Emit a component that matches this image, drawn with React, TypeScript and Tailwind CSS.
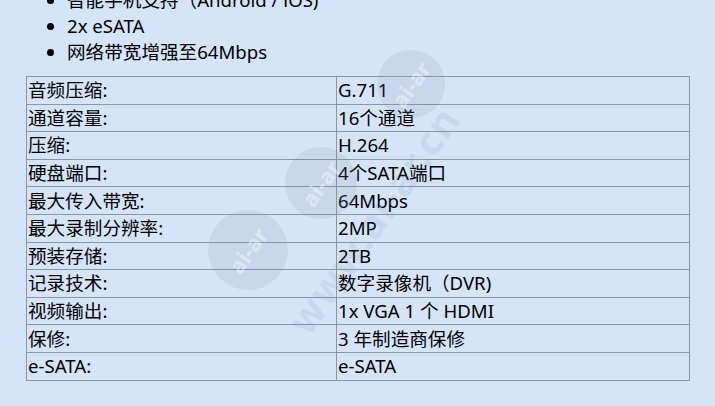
import React from "react";

const rows: [string, string][] = [
  ["音频压缩:", "G.711"],
  ["通道容量:", "16个通道"],
  ["压缩:", "H.264"],
  ["硬盘端口:", "4个SATA端口"],
  ["最大传入带宽:", "64Mbps"],
  ["最大录制分辨率:", "2MP"],
  ["预装存储:", "2TB"],
  ["记录技术:", "数字录像机（DVR)"],
  ["视频输出:", "1x VGA 1 个 HDMI"],
  ["保修:", "3 年制造商保修"],
  ["e-SATA:", "e-SATA"],
];

// faint watermark disc
const Badge = ({ className }: { className: string }) => (
  <div
    className={`absolute flex items-center justify-center rounded-full bg-[#7d8aa3]/15 ${className}`}
  >
    <span className="-rotate-[55deg] text-[22px] font-bold text-white/40">ai-ar</span>
  </div>
);

export default function App() {
  return (
    <div
      className="relative h-[406px] w-[715px] overflow-hidden bg-[#d6e4fa] text-[18.6px] text-black"
      style={{ fontFamily: '"Noto Sans", "Noto Sans CJK SC", sans-serif' }}
    >
      <ul className="-mt-[13px] list-disc pl-[67px] leading-[26px]">
        <li>智能手机支持（Android / iOS)</li>
        <li>2x eSATA</li>
        <li>网络带宽增强至64Mbps</li>
      </ul>

      <table className="ml-[26px] mt-[11px] w-[664px] table-fixed border-collapse">
        <colgroup>
          <col className="w-[310px]" />
          <col />
        </colgroup>
        <tbody>
          {rows.map(([k, v]) => (
            <tr key={k} className="h-[27.6px]">
              <td className="border border-[#8a95a5] px-px py-0 leading-[26px]">{k}</td>
              <td className="border border-[#8a95a5] px-px py-0 leading-[26px]">{v}</td>
            </tr>
          ))}
        </tbody>
      </table>

      {/* watermark */}
      <div className="pointer-events-none absolute inset-0">
        <Badge className="left-[377px] top-[50px] h-[68px] w-[68px]" />
        <Badge className="left-[285px] top-[147px] h-[72px] w-[72px]" />
        <Badge className="left-[208px] top-[210px] h-[80px] w-[80px]" />
        <div className="absolute left-[240px] top-[190px] -rotate-[55deg] whitespace-nowrap text-[40px] font-bold tracking-wide text-[#7d8aa3]/15">
          www.ai-ar.cn
        </div>
      </div>
    </div>
  );
}
